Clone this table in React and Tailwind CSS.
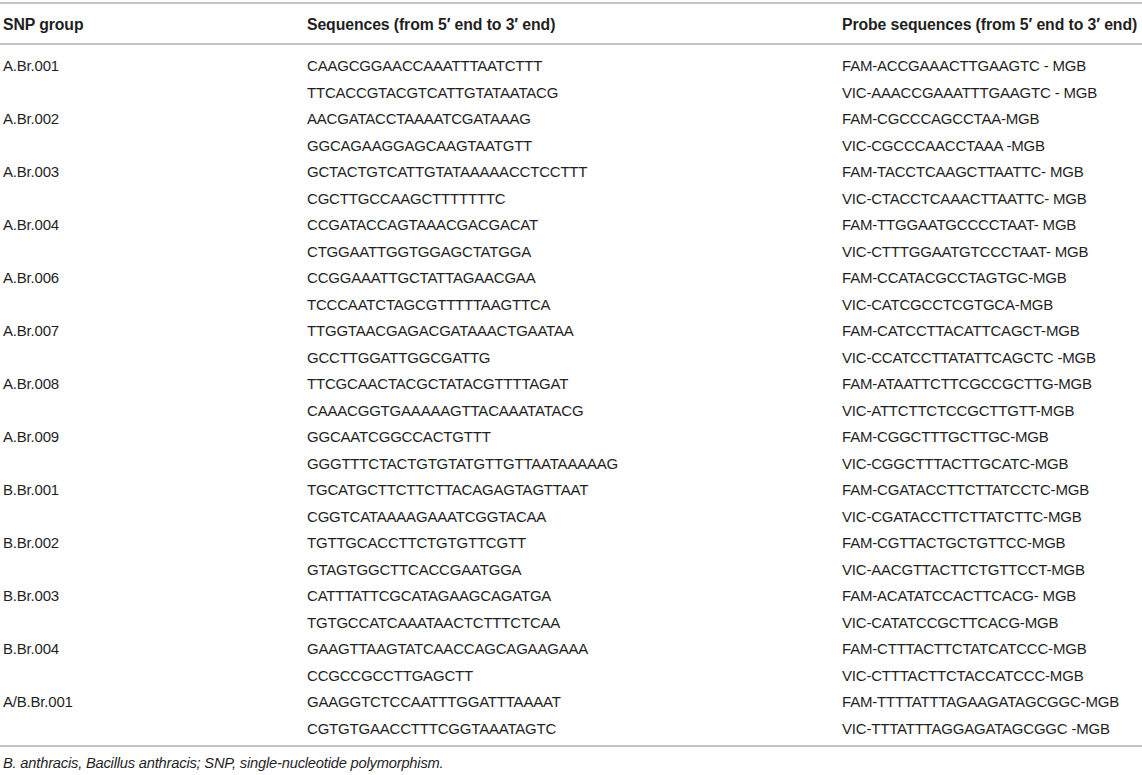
import React from 'react';

// SNP primer / probe table
const rows = [
  ['A.Br.001', ['CAAGCGGAACCAAATTTAATCTTT', 'TTCACCGTACGTCATTGTATAATACG'], ['FAM-ACCGAAACTTGAAGTC - MGB', 'VIC-AAACCGAAATTTGAAGTC - MGB']],
  ['A.Br.002', ['AACGATACCTAAAATCGATAAAG', 'GGCAGAAGGAGCAAGTAATGTT'], ['FAM-CGCCCAGCCTAA-MGB', 'VIC-CGCCCAACCTAAA -MGB']],
  ['A.Br.003', ['GCTACTGTCATTGTATAAAAACCTCCTTT', 'CGCTTGCCAAGCTTTTTTTC'], ['FAM-TACCTCAAGCTTAATTC- MGB', 'VIC-CTACCTCAAACTTAATTC- MGB']],
  ['A.Br.004', ['CCGATACCAGTAAACGACGACAT', 'CTGGAATTGGTGGAGCTATGGA'], ['FAM-TTGGAATGCCCCTAAT- MGB', 'VIC-CTTTGGAATGTCCCTAAT- MGB']],
  ['A.Br.006', ['CCGGAAATTGCTATTAGAACGAA', 'TCCCAATCTAGCGTTTTTAAGTTCA'], ['FAM-CCATACGCCTAGTGC-MGB', 'VIC-CATCGCCTCGTGCA-MGB']],
  ['A.Br.007', ['TTGGTAACGAGACGATAAACTGAATAA', 'GCCTTGGATTGGCGATTG'], ['FAM-CATCCTTACATTCAGCT-MGB', 'VIC-CCATCCTTATATTCAGCTC -MGB']],
  ['A.Br.008', ['TTCGCAACTACGCTATACGTTTTAGAT', 'CAAACGGTGAAAAAGTTACAAATATACG'], ['FAM-ATAATTCTTCGCCGCTTG-MGB', 'VIC-ATTCTTCTCCGCTTGTT-MGB']],
  ['A.Br.009', ['GGCAATCGGCCACTGTTT', 'GGGTTTCTACTGTGTATGTTGTTAATAAAAAG'], ['FAM-CGGCTTTGCTTGC-MGB', 'VIC-CGGCTTTACTTGCATC-MGB']],
  ['B.Br.001', ['TGCATGCTTCTTCTTACAGAGTAGTTAAT', 'CGGTCATAAAAGAAATCGGTACAA'], ['FAM-CGATACCTTCTTATCCTC-MGB', 'VIC-CGATACCTTCTTATCTTC-MGB']],
  ['B.Br.002', ['TGTTGCACCTTCTGTGTTCGTT', 'GTAGTGGCTTCACCGAATGGA'], ['FAM-CGTTACTGCTGTTCC-MGB', 'VIC-AACGTTACTTCTGTTCCT-MGB']],
  ['B.Br.003', ['CATTTATTCGCATAGAAGCAGATGA', 'TGTGCCATCAAATAACTCTTTCTCAA'], ['FAM-ACATATCCACTTCACG- MGB', 'VIC-CATATCCGCTTCACG-MGB']],
  ['B.Br.004', ['GAAGTTAAGTATCAACCAGCAGAAGAAA', 'CCGCCGCCTTGAGCTT'], ['FAM-CTTTACTTCTATCATCCC-MGB', 'VIC-CTTTACTTCTACCATCCC-MGB']],
  ['A/B.Br.001', ['GAAGGTCTCCAATTTGGATTTAAAAT', 'CGTGTGAACCTTTCGGTAAATAGTC'], ['FAM-TTTTATTTAGAAGATAGCGGC-MGB', 'VIC-TTTATTTAGGAGATAGCGGC -MGB']],
];

const cols = 'grid grid-cols-[304px_535px_1fr] pl-[3px]';

export default function App() {
  return (
    <div className="w-[1142px] h-[775px] bg-white text-[#1f1f1f] text-[15px] tracking-[-0.2px] font-['Liberation_Sans',Arial,sans-serif] pt-[2px] overflow-hidden">
      {/* Header */}
      <div className={`${cols} border-t-2 border-b-2 border-[#c4c4c4] h-[43px] items-center pt-[3px] font-bold text-[15.8px] tracking-[-0.1px] whitespace-nowrap`}>
        <div>SNP group</div>
        <div>Sequences (from 5′ end to 3′ end)</div>
        <div>Probe sequences (from 5′ end to 3′ end)</div>
      </div>

      {/* Body */}
      <div className="border-b-2 border-[#c4c4c4] pt-[8px] pb-[3px] leading-[26.5px]">
        {rows.map(([group, seqs, probes]) => (
          <div key={group} className={cols}>
            <div>{group}</div>
            <div>
              {seqs.map((s) => (
                <div key={s}>{s}</div>
              ))}
            </div>
            <div>
              {probes.map((p) => (
                <div key={p}>{p}</div>
              ))}
            </div>
          </div>
        ))}
      </div>

      {/* Footnote */}
      <p className="pl-[3px] pt-[6px] italic text-[14.7px] leading-[20px]">
        B. anthracis, Bacillus anthracis; SNP, single-nucleotide polymorphism.
      </p>
    </div>
  );
}
